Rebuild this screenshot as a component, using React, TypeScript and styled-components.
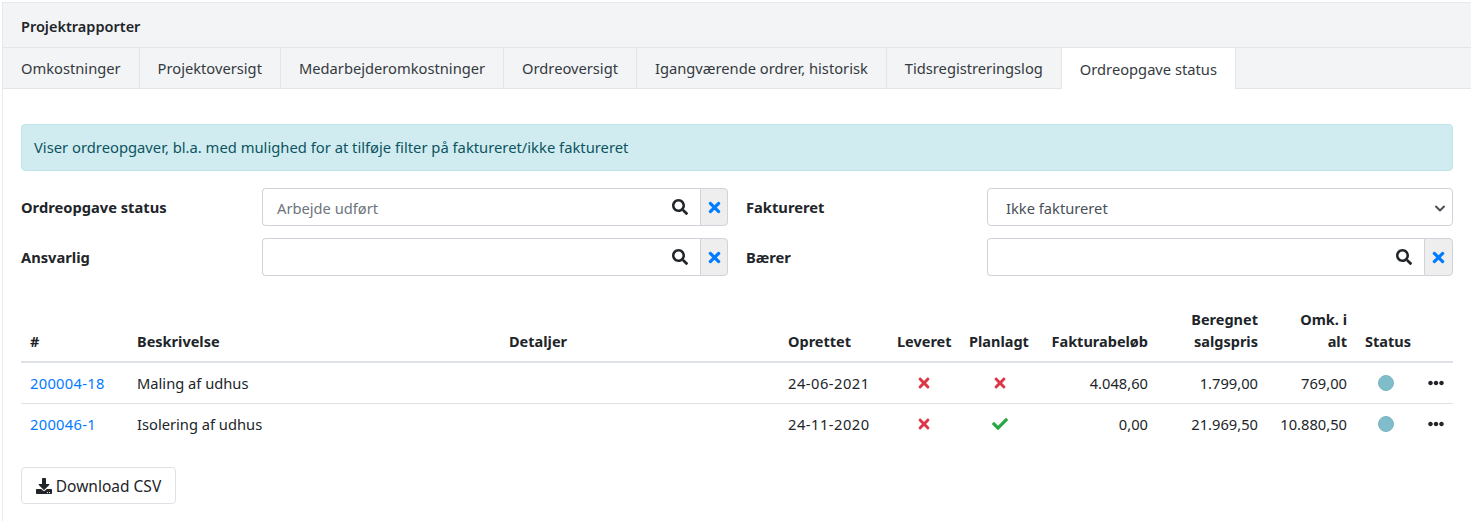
import React from "react";
import styled, { createGlobalStyle } from "styled-components";
import { FaSearch, FaTimes, FaCheck, FaEllipsisH, FaDownload } from "react-icons/fa";

const Global = createGlobalStyle`
  html, body { margin: 0; padding: 0; background: #fff; }
  body { font-family: "Noto Sans", "Open Sans", sans-serif; font-size: 14.7px; color: #212529; }
  * { box-sizing: border-box; }
`;

const Card = styled.div`
  margin: 2px 0 0 2px;
  border: 1px solid #e7e9ec;
  border-right: 0;
  border-bottom: 0;
  height: 519px;
  overflow: hidden;
`;
const Header = styled.div`
  height: 45px;
  padding: 2px 18px 0;
  display: flex;
  align-items: center;
  background: #f3f4f6;
  border-bottom: 1px solid #e3e5e8;
  font-weight: 600;
  font-size: 14.5px;
`;
const Tabs = styled.div`
  display: flex;
  height: 41px;
  background: #f3f4f6;
  border-bottom: 1px solid #e3e5e8;
`;
const Tab = styled.div<{ $active?: boolean }>`
  height: ${(p) => (p.$active ? "41px" : "40px")};
  padding: 0 18px;
  display: flex;
  align-items: center;
  border-right: 1px solid #e3e5e8;
  background: ${(p) => (p.$active ? "#fff" : "transparent")};
  color: #343a40;
  white-space: nowrap;
`;
const Body = styled.div`
  padding: 35px 18px 0;
`;
const Alert = styled.div`
  height: 47px;
  padding: 0 12px 2px;
  display: flex;
  align-items: center;
  background: #d1ecf1;
  border: 1px solid #bee5eb;
  border-radius: 4px;
  color: #0c5460;
  font-size: 14.78px;
`;
const FilterGrid = styled.div`
  margin-top: 17px;
  display: grid;
  grid-template-columns: 241px 466px 259px 466px;
  row-gap: 12px;
`;
const FilterLabel = styled.div<{ $second?: boolean }>`
  display: flex;
  align-items: center;
  font-weight: 700;
  margin-left: ${(p) => (p.$second ? "18px" : "0")};
`;
const Group = styled.div`
  display: flex;
  height: 38px;
`;
const InputBox = styled.div`
  flex: 1;
  display: flex;
  align-items: center;
  justify-content: space-between;
  padding: 1px 12px 0 14px;
  border: 1px solid #ced4da;
  border-right: 0;
  border-radius: 4px 0 0 4px;
  color: #6c757d;
  svg { color: #212529; width: 16px; height: 16px; margin-top: -2px; }
`;
const ClearBtn = styled.div<{ $wide?: boolean }>`
  width: ${(p) => (p.$wide ? "29px" : "28px")};
  display: flex;
  align-items: center;
  justify-content: center;
  background: #eeeeee;
  border: 1px solid #ced4da;
  border-radius: 0 4px 4px 0;
  color: #007bff;
  svg { width: 17px; height: 17px; }
`;
const SelectBox = styled.div`
  height: 38px;
  display: flex;
  align-items: center;
  justify-content: space-between;
  padding: 1px 4px 0 18px;
  border: 1px solid #ced4da;
  border-radius: 4px;
  color: #495057;
`;
const Table = styled.table`
  margin-top: 32px;
  width: 1432px;
  table-layout: fixed;
  border-collapse: collapse;
`;
const Th = styled.th<{ $align?: string }>`
  padding: 0 9px 9px;
  vertical-align: bottom;
  font-weight: 700;
  font-size: 14.5px;
  line-height: 22px;
  text-align: ${(p) => p.$align || "left"};
  border-bottom: 2px solid #dee2e6;
`;
const Td = styled.td<{ $align?: string }>`
  height: 41px;
  padding: 0 9px;
  text-align: ${(p) => p.$align || "left"};
  border-bottom: 1px solid #dee2e6;
  vertical-align: middle;
`;
const DateCell = styled(Td)`
  letter-spacing: 0.5px;
`;
const LastRow = styled.tr`
  td { border-bottom: 0; }
`;
const LinkText = styled.a`
  color: #007bff;
  letter-spacing: 0.3px;
`;
const Cross = styled(FaTimes)`
  color: #dc3545;
  width: 16px;
  height: 16px;
  display: block;
  margin: 0 auto;
`;
const Check = styled(FaCheck)`
  color: #28a745;
  width: 16px;
  height: 16px;
  display: block;
  margin: 0 auto;
`;
const Dot = styled.span`
  display: block;
  width: 16px;
  height: 16px;
  margin-left: 13px;
  border-radius: 50%;
  background: #80bdcb;
  border: 1px solid #7ab5c4;
`;
const More = styled(FaEllipsisH)`
  color: #212529;
  width: 16px;
  height: 16px;
  display: block;
`;
const DownloadBtn = styled.button`
  margin-top: 23px;
  height: 37px;
  width: 155px;
  display: flex;
  align-items: center;
  justify-content: center;
  gap: 4px;
  background: #fff;
  border: 1px solid #dee2e6;
  border-radius: 4px;
  color: #212529;
  font: inherit;
  font-size: 15.5px;
  svg { width: 16px; height: 16px; }
`;

const Chevron = () => (
  <svg width="16" height="16" viewBox="0 0 16 16">
    <path d="M4 6.5 L8 10.5 L12 6.5" fill="none" stroke="#495057" strokeWidth="2" strokeLinecap="round" strokeLinejoin="round" />
  </svg>
);

const widths = [107, 372, 279, 109, 72, 79, 118, 110, 89, 63, 34];

export default function App() {
  return (
    <>
      <Global />
      <Card>
        <Header>Projektrapporter</Header>
        <Tabs>
          <Tab>Omkostninger</Tab>
          <Tab>Projektoversigt</Tab>
          <Tab>Medarbejderomkostninger</Tab>
          <Tab>Ordreoversigt</Tab>
          <Tab>Igangværende ordrer, historisk</Tab>
          <Tab>Tidsregistreringslog</Tab>
          <Tab $active>Ordreopgave status</Tab>
        </Tabs>
        <Body>
          <Alert>Viser ordreopgaver, bl.a. med mulighed for at tilføje filter på faktureret/ikke faktureret</Alert>
          <FilterGrid>
            <FilterLabel>Ordreopgave status</FilterLabel>
            <Group>
              <InputBox>Arbejde udført<FaSearch /></InputBox>
              <ClearBtn><FaTimes /></ClearBtn>
            </Group>
            <FilterLabel $second>Faktureret</FilterLabel>
            <SelectBox>Ikke faktureret<Chevron /></SelectBox>
            <FilterLabel>Ansvarlig</FilterLabel>
            <Group>
              <InputBox><span /><FaSearch /></InputBox>
              <ClearBtn><FaTimes /></ClearBtn>
            </Group>
            <FilterLabel $second>Bærer</FilterLabel>
            <Group>
              <InputBox><span /><FaSearch /></InputBox>
              <ClearBtn $wide><FaTimes /></ClearBtn>
            </Group>
          </FilterGrid>
          <Table>
            <colgroup>
              {widths.map((w, i) => <col key={i} width={w} />)}
            </colgroup>
            <thead>
              <tr>
                <Th>#</Th>
                <Th>Beskrivelse</Th>
                <Th>Detaljer</Th>
                <Th>Oprettet</Th>
                <Th>Leveret</Th>
                <Th>Planlagt</Th>
                <Th $align="right">Fakturabeløb</Th>
                <Th $align="right">Beregnet<br />salgspris</Th>
                <Th $align="right">Omk. i<br />alt</Th>
                <Th>Status</Th>
                <Th />
              </tr>
            </thead>
            <tbody>
              <tr>
                <Td><LinkText>200004-18</LinkText></Td>
                <Td>Maling af udhus</Td>
                <Td />
                <DateCell>24-06-2021</DateCell>
                <Td><Cross /></Td>
                <Td><Cross /></Td>
                <Td $align="right">4.048,60</Td>
                <Td $align="right">1.799,00</Td>
                <Td $align="right">769,00</Td>
                <Td><Dot /></Td>
                <Td><More /></Td>
              </tr>
              <LastRow>
                <Td><LinkText>200046-1</LinkText></Td>
                <Td>Isolering af udhus</Td>
                <Td />
                <DateCell>24-11-2020</DateCell>
                <Td><Cross /></Td>
                <Td><Check /></Td>
                <Td $align="right">0,00</Td>
                <Td $align="right">21.969,50</Td>
                <Td $align="right">10.880,50</Td>
                <Td><Dot /></Td>
                <Td><More /></Td>
              </LastRow>
            </tbody>
          </Table>
          <DownloadBtn><FaDownload />Download CSV</DownloadBtn>
        </Body>
      </Card>
    </>
  );
}
